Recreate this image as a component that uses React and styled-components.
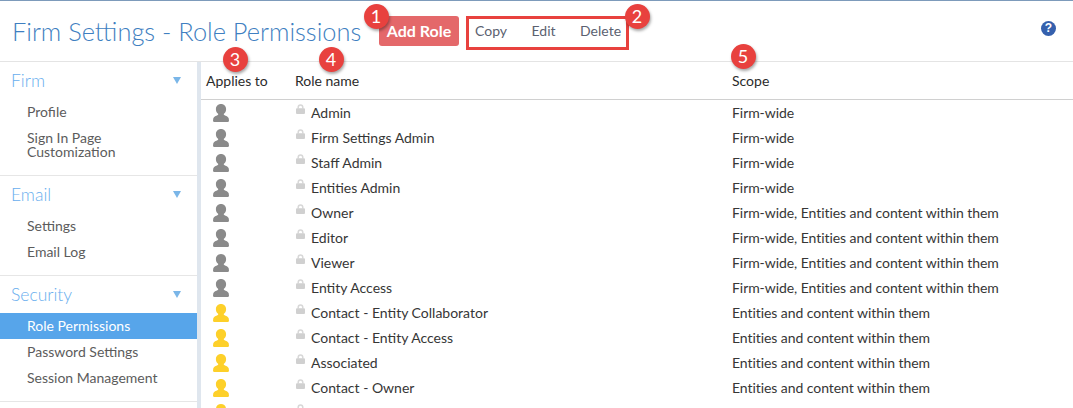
import React from 'react';
import styled, { createGlobalStyle } from 'styled-components';

const GlobalStyle = createGlobalStyle`
  html, body {
    margin: 0;
    height: 408px;
    overflow: hidden;
    background: #fff;
    font-family: Lato, "Open Sans", sans-serif;
  }
`;

const Page = styled.div`
  position: relative;
  height: 408px;
  overflow: hidden;
  border-top: 1px solid #7d9bbb;
  box-sizing: border-box;
`;

const Header = styled.header`
  display: flex;
  align-items: center;
  height: 61px;
  padding: 0 17px 0 12px;
  box-sizing: border-box;
  border-bottom: 1px solid #e4e4e4;
`;

const Title = styled.h1`
  width: 350px;
  margin: 0 17px 0 0;
  font-size: 25.4px;
  font-weight: 300;
  line-height: 58px;
  color: #3f7fc1;
  white-space: nowrap;
`;

const AddButton = styled.button`
  width: 80px;
  height: 30px;
  padding: 0 0 2px;
  margin-right: 7px;
  border: 0;
  border-radius: 3px;
  background: #e4686a;
  color: #fff;
  font: 700 16px Lato, sans-serif;
`;

const Actions = styled.div`
  display: flex;
  align-items: center;
  gap: 24.5px;
  width: 163px;
  height: 34px;
  margin-top: 4px;
  padding: 0 6px 6px;
  box-sizing: border-box;
  border: 3px solid #e8413e;
`;

const Action = styled.span`
  font-size: 14px;
  color: #5b6170;
`;

const Help = styled.span`
  display: flex;
  align-items: center;
  justify-content: center;
  width: 15px;
  height: 15px;
  margin: -6px 0 0 auto;
  border-radius: 50%;
  background: #3560ad;
  color: #fff;
  font: 700 12px "Liberation Sans", sans-serif;
`;

const Body = styled.div`
  display: flex;
`;

const Sidebar = styled.nav`
  flex: none;
  width: 197px;
  min-height: 346px;
  border-right: 4px solid #dfe6ee;
`;

const Section = styled.section`
  padding-bottom: 10px;
  border-bottom: 1px solid #e6e6e6;
`;

const SectionHead = styled.div`
  display: flex;
  align-items: center;
  justify-content: space-between;
  height: 37px;
  padding: 0 16px 0 11px;
  font-size: 17.5px;
  font-weight: 300;
  color: #68aeee;
`;

const Caret = styled.span`
  width: 0;
  height: 0;
  border-left: 4.5px solid transparent;
  border-right: 4.5px solid transparent;
  border-top: 7px solid #7ab6e8;
`;

const NavItem = styled.div`
  padding: 6px 27px;
  font-size: 14px;
  line-height: 14px;
  color: ${p => (p.$active ? '#fff' : '#5c5c5c')};
  background: ${p => (p.$active ? '#57a5ea' : 'transparent')};
`;

const Main = styled.main`
  flex: 1;
  min-width: 0;
`;

const HeadRow = styled.div`
  display: grid;
  grid-template-columns: 89px 437px 1fr;
  align-items: center;
  height: 37px;
  padding-left: 5px;
  border-bottom: 1px solid #d0d0d0;
  font-size: 14px;
  color: #2b2b2b;
`;

const Row = styled.div`
  display: grid;
  grid-template-columns: 89px 437px 1fr;
  align-items: center;
  height: 25px;
  padding-left: 5px;
  font-size: 14px;
  color: #363636;
`;

const IconCell = styled.div`
  display: flex;
  padding-left: 7px;
`;

const NameCell = styled.div`
  display: flex;
  align-items: center;
  gap: 6px;
  padding-left: 1px;
`;

const ScopeCell = styled.div`
  letter-spacing: -0.06px;
`;

const LockIcon = styled.svg`
  flex: none;
  width: 9px;
  height: 10px;
  margin-top: -7px;
`;

const Badge = styled.span`
  position: absolute;
  left: ${p => p.$x - 12.5}px;
  top: ${p => p.$y - 13.5}px;
  display: flex;
  align-items: center;
  justify-content: center;
  width: 25px;
  height: 25px;
  border-radius: 50%;
  background: #e8413e;
  box-shadow: 1px 2px 3px rgba(0, 0, 0, 0.35);
  color: #fff;
  font: 400 18px Lato, sans-serif;
`;

const Person = ({ color }) => (
  <svg width="16" height="18" viewBox="0 0 16 18">
    <path
      fill={color}
      d="M8 0C5 0 2.900 2.200 2.900 5.200c0 2 .9 3.700 2.200 4.600.3.400.2 1-.3 1.300C3 12 .9 12.700.3 14.300L0 16.800c0 .7.400 1.200 1.100 1.200h13.800c.7 0 1.100-.5 1.100-1.200l-.3-2.500c-.6-1.600-2.700-2.300-4.500-3.200-.5-.3-.6-.9-.3-1.300 1.300-.9 2.200-2.600 2.200-4.600C13.100 2.200 11 0 8 0z"
    />
  </svg>
);

const Lock = () => (
  <LockIcon viewBox="0 0 9 10">
    <path fill="none" stroke="#d8d8d8" strokeWidth="1.500" d="M2.200 4.500V3.200a2.300 2.300 0 0 1 4.600 0v1.300" />
    <rect x="0" y="4.200" width="9" height="5.800" rx="1" fill="#d0d0d0" />
  </LockIcon>
);

const FIRM = 'Firm-wide';
const ALL = 'Firm-wide, Entities and content within them';
const ENT = 'Entities and content within them';
const GREY = '#8a8a8a';
const YELLOW = '#fdd02a';

const roles = [
  ['Admin', FIRM, GREY],
  ['Firm Settings Admin', FIRM, GREY],
  ['Staff Admin', FIRM, GREY],
  ['Entities Admin', FIRM, GREY],
  ['Owner', ALL, GREY],
  ['Editor', ALL, GREY],
  ['Viewer', ALL, GREY],
  ['Entity Access', ALL, GREY],
  ['Contact - Entity Collaborator', ENT, YELLOW],
  ['Contact - Entity Access', ENT, YELLOW],
  ['Associated', ENT, YELLOW],
  ['Contact - Owner', ENT, YELLOW],
  ['', '', YELLOW]
];

const App = () => (
  <Page>
    <GlobalStyle />
    <Header>
      <Title>Firm Settings - Role Permissions</Title>
      <AddButton>Add Role</AddButton>
      <Actions>
        <Action>Copy</Action>
        <Action>Edit</Action>
        <Action>Delete</Action>
      </Actions>
      <Help>?</Help>
    </Header>
    <Body>
      <Sidebar>
        <Section>
          <SectionHead>Firm<Caret /></SectionHead>
          <NavItem>Profile</NavItem>
          <NavItem>Sign In Page<br />Customization</NavItem>
        </Section>
        <Section>
          <SectionHead>Email<Caret /></SectionHead>
          <NavItem>Settings</NavItem>
          <NavItem>Email Log</NavItem>
        </Section>
        <Section>
          <SectionHead>Security<Caret /></SectionHead>
          <NavItem $active>Role Permissions</NavItem>
          <NavItem>Password Settings</NavItem>
          <NavItem>Session Management</NavItem>
        </Section>
      </Sidebar>
      <Main>
        <HeadRow>
          <div>Applies to</div>
          <div>Role name</div>
          <div>Scope</div>
        </HeadRow>
        {roles.map(([name, scope, color], i) => (
          <Row key={i}>
            <IconCell><Person color={color} /></IconCell>
            <NameCell><Lock />{name}</NameCell>
            <ScopeCell>{scope}</ScopeCell>
          </Row>
        ))}
      </Main>
    </Body>
    <Badge $x={376} $y={16}>1</Badge>
    <Badge $x={637} $y={16}>2</Badge>
    <Badge $x={235} $y={59}>3</Badge>
    <Badge $x={331} $y={59}>4</Badge>
    <Badge $x={743} $y={56}>5</Badge>
  </Page>
);

export default App;
